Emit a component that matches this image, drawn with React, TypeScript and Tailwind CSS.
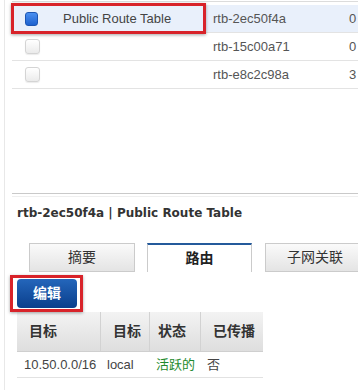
const sans = "font-['Liberation_Sans','Noto_Sans_CJK_SC',sans-serif]";

function Check({ on }: { on?: boolean }) {
  if (on) {
    return (
      <span className="block h-[14px] w-[13px] rounded-[3px] border border-[#1d56b3] bg-gradient-to-b from-[#4a8ff0] to-[#1e62cf]" />
    );
  }
  return (
    <span className="block h-[15px] w-[15px] rounded-[3px] border border-[#d4d4d4] bg-gradient-to-b from-[#ffffff] to-[#ebebeb] shadow-[0_1px_1px_rgba(0,0,0,0.08)]" />
  );
}

const rows = [
  { name: "Public Route Table", id: "rtb-2ec50f4a", last: "0", on: true },
  { name: "", id: "rtb-15c00a71", last: "0" },
  { name: "", id: "rtb-e8c2c98a", last: "3" },
];

export default function App() {
  return (
    <div className={`h-[390px] w-[358px] overflow-hidden bg-white text-[#444] ${sans}`}>
      <div className="ml-[4px] h-full border-l border-[#e8e8e8] pl-[7px]">
        {/* top list */}
        <div className="relative h-[193px] pt-[1px]">
          <div className="border-t border-[#dcdcdc] pt-[3px]">
            {rows.map((r) => (
              <div
                key={r.id}
                className={`flex h-[28px] items-center border-b border-[#e3e3e3] text-[13px] ${
                  r.on ? "bg-[#e9f0fb]" : ""
                }`}
              >
                <div className="flex w-[51px] shrink-0 items-center pl-[13px]">
                  <Check on={r.on} />
                </div>
                <div className="w-[150px] shrink-0 text-[#444]">{r.name}</div>
                <div className="w-[136px] shrink-0 text-[#555]">{r.id}</div>
                <div className="text-[#555]">{r.last}</div>
              </div>
            ))}
          </div>
          <div className="absolute -left-[1px] top-[3px] h-[31px] w-[195px] border-[3px] border-[#d8232a] shadow-[0_1px_3px_rgba(0,0,0,0.35)]" />
        </div>

        {/* splitter */}
        <div className="h-[1px] bg-[#c9c9c9]" />
        <div className="mt-[2px] h-[1px] bg-[#efefef]" />

        {/* detail */}
        <div className="mt-[8px] pl-[5px] font-['DejaVu_Sans','Noto_Sans_CJK_SC',sans-serif] text-[12px] font-bold leading-[16px] text-[#333]">
          rtb-2ec50f4a | Public Route Table
        </div>

        <div className="mt-[22px] flex h-[29px] pl-[17px] text-[14px] text-[#333]">
          <div className="flex w-[106px] shrink-0 items-center justify-center border border-[#cbcbcb] bg-gradient-to-b from-[#fafafa] to-[#e4e4e4]">
            摘要
          </div>
          <div className="ml-[12px] flex w-[105px] shrink-0 items-center justify-center border-x border-t-2 border-x-[#cbcbcb] border-t-[#245a9b] bg-white font-bold text-[#222]">
            路由
          </div>
          <div className="ml-[13px] flex w-[100px] shrink-0 items-center justify-center border border-[#cbcbcb] bg-gradient-to-b from-[#fafafa] to-[#e4e4e4]">
            子网关联
          </div>
        </div>

        <div className="relative ml-[5px] mt-[7px] w-[60px]">
          <button className="flex h-[29px] w-[60px] items-center justify-center rounded-[4px] bg-gradient-to-b from-[#2466bb] to-[#0a3f8c] text-[14px] font-bold text-white">
            编辑
          </button>
          <div className="absolute -bottom-[4px] -left-[7px] -right-[6px] -top-[4px] border-[3px] border-[#d8232a] shadow-[0_1px_3px_rgba(0,0,0,0.35)]" />
        </div>

        <div className="ml-[5px] mt-[4px] w-[246px]">
          <div className="flex h-[40px] border-b border-[#cfcfcf] bg-gradient-to-b from-[#f3f3f3] to-[#dedede] text-[14px] font-bold text-[#333]">
            <div className="flex w-[84px] items-center border-r border-[#d2d2d2] pl-[12px]">目标</div>
            <div className="flex w-[49px] items-center border-r border-[#d2d2d2] pl-[12px]">目标</div>
            <div className="flex w-[51px] items-center border-r border-[#d2d2d2] pl-[8px]">状态</div>
            <div className="flex w-[62px] items-center pl-[12px]">已传播</div>
          </div>
          <div className="flex h-[26px] items-center border-b border-[#e2e2e2] text-[13px] text-[#444]">
            <div className="w-[84px] pl-[7px]">10.50.0.0/16</div>
            <div className="w-[49px] pl-[6px]">local</div>
            <div className="w-[51px] pl-[6px] text-[#1e8a2e]">活跃的</div>
            <div className="w-[62px] pl-[6px]">否</div>
          </div>
        </div>
      </div>
    </div>
  );
}
